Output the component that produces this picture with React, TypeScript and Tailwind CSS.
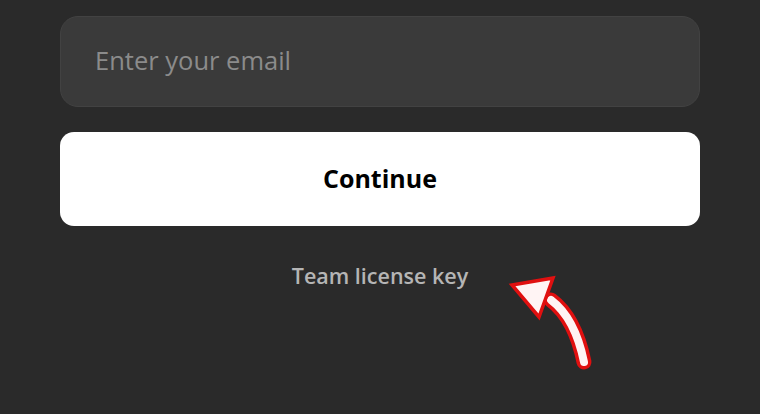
import { useState } from "react";

export default function App() {
  const [email, setEmail] = useState("");

  return (
    <div
      className="relative w-[760px] h-[414px] overflow-hidden bg-[#2a2a2a]"
      style={{ fontFamily: "'Open Sans', 'Noto Sans', sans-serif" }}
    >
      <div className="flex flex-col items-center px-[60px] pt-[16px]">
        {/* Email field */}
        <input
          type="email"
          value={email}
          onChange={(e) => setEmail(e.target.value)}
          placeholder="Enter your email"
          className="w-full h-[91px] rounded-[18px] border border-[#424242] bg-[#3a3a3a] px-[34px] pb-[3px] text-[25.5px] text-white placeholder:text-[#8b8b8b] outline-none"
        />

        {/* Continue */}
        <button className="mt-[25px] w-full h-[94px] rounded-[14px] bg-white text-[25px] font-bold text-black">
          Continue
        </button>

        <button className="mt-[34px] text-[21.5px] font-semibold text-[#b5b5b5]">
          Team license key
        </button>
      </div>

      {/* annotation arrow */}
      <svg
        className="pointer-events-none absolute inset-0"
        width="760"
        height="414"
        viewBox="0 0 760 414"
      >
        <path
          d="M551 300 Q575 318 584 362"
          fill="none"
          stroke="#e01010"
          strokeWidth="15"
          strokeLinecap="round"
        />
        <path
          d="M551 300 Q575 318 584 362"
          fill="none"
          stroke="#fff4f4"
          strokeWidth="8"
          strokeLinecap="round"
        />
        <polygon
          points="512,285 553,278 539,317"
          fill="#fff4f4"
          stroke="#e01010"
          strokeWidth="3.5"
          strokeLinejoin="miter"
        />
      </svg>
    </div>
  );
}
